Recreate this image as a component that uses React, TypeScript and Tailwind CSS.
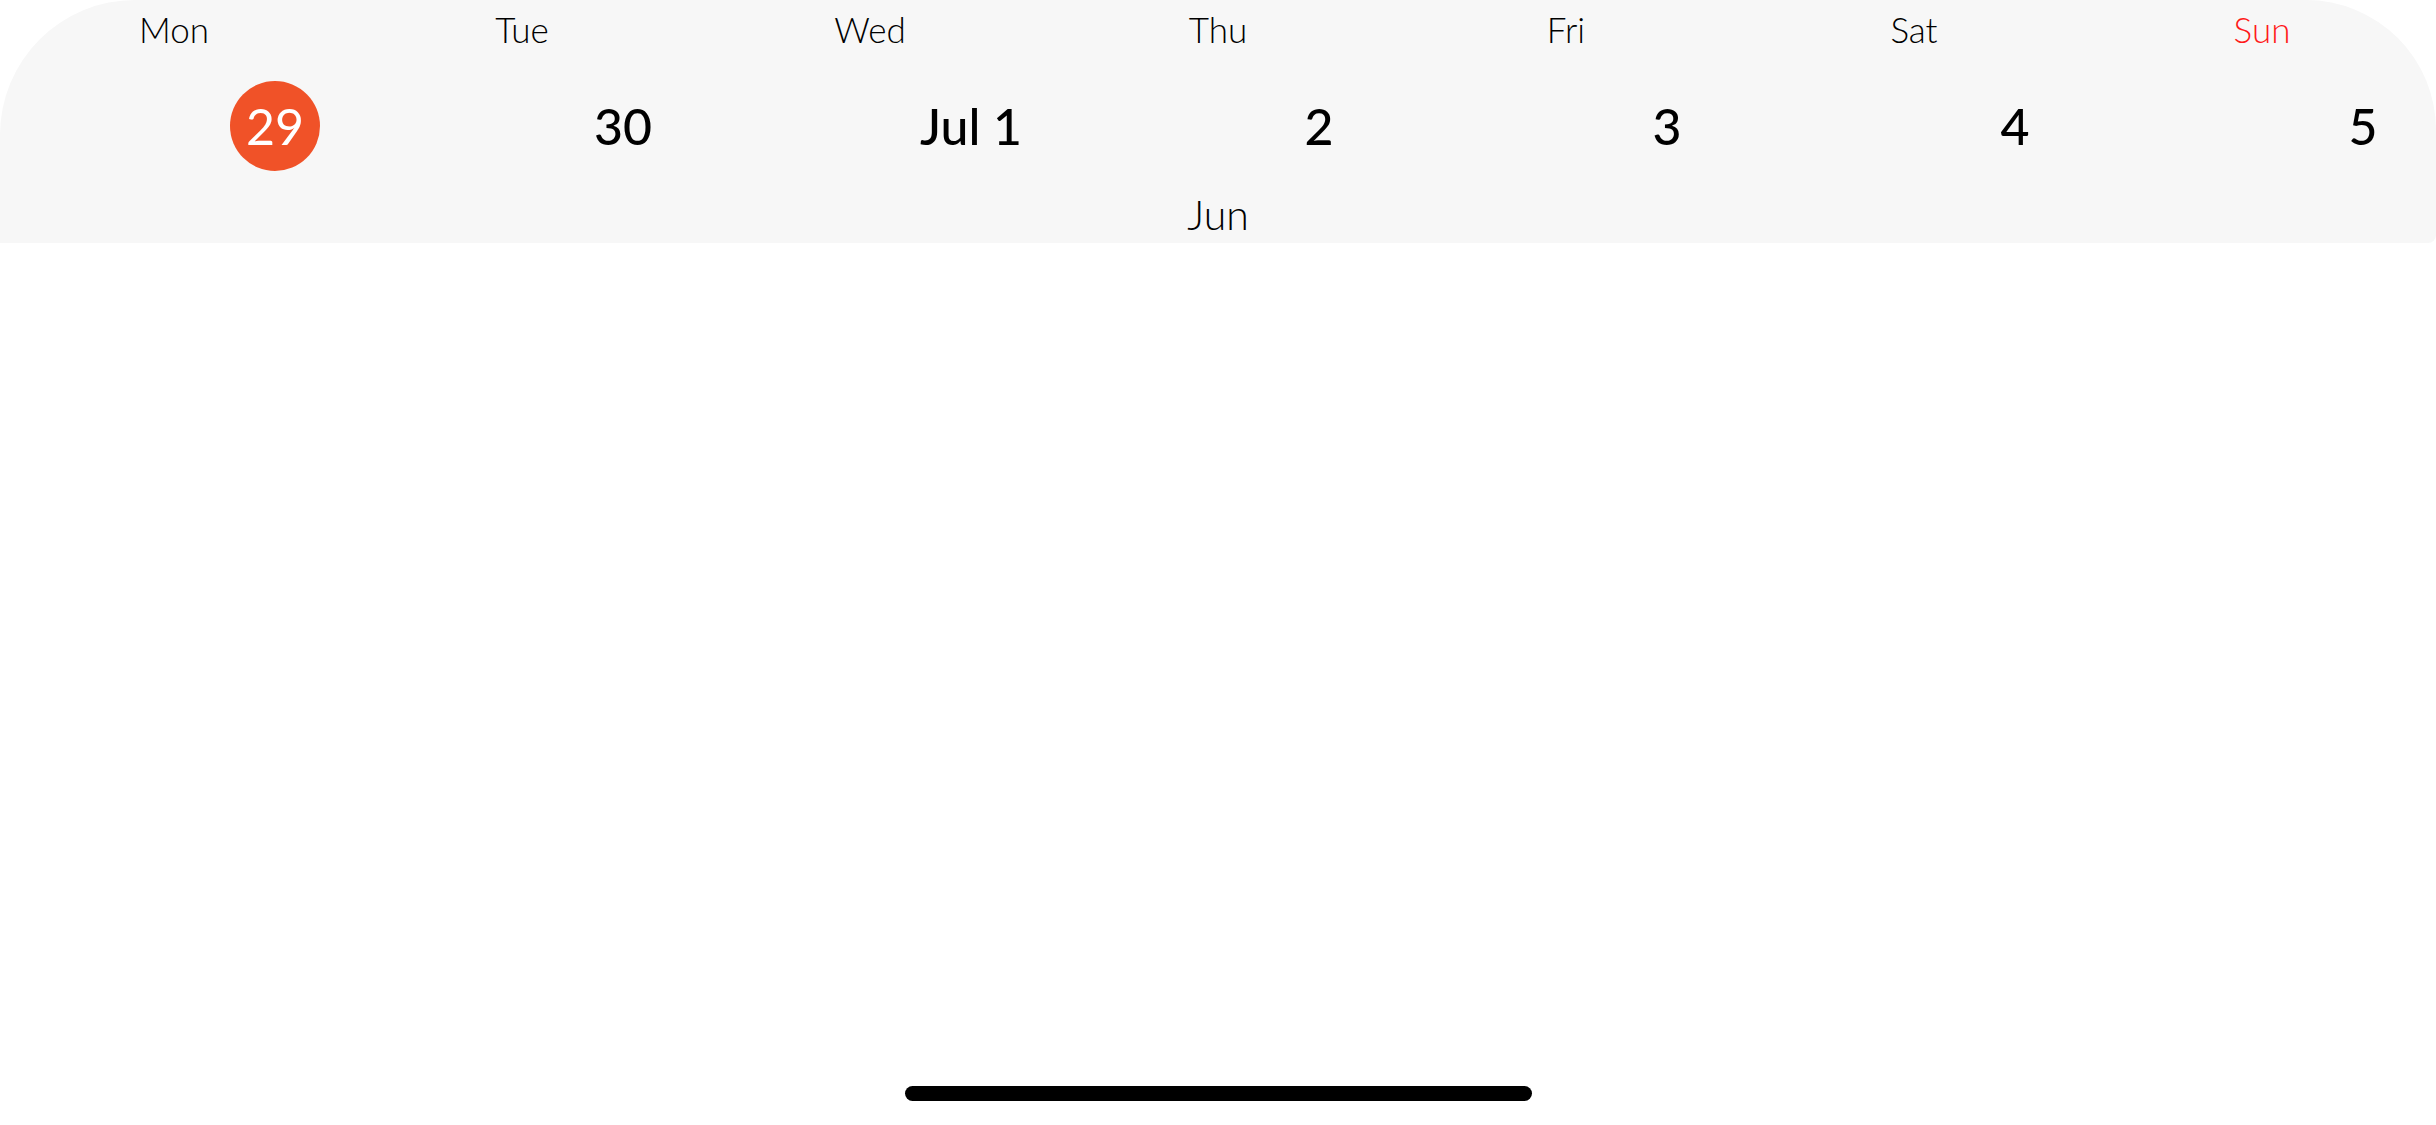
import React from "react";

const days = [
  { name: "Mon", date: "29", today: true },
  { name: "Tue", date: "30" },
  { name: "Wed", date: "Jul 1" },
  { name: "Thu", date: "2" },
  { name: "Fri", date: "3" },
  { name: "Sat", date: "4" },
  { name: "Sun", date: "5", sunday: true },
];

export default function App() {
  return (
    <div
      className="w-[2436px] h-[1125px] bg-white flex flex-col overflow-hidden"
      style={{ fontFamily: "Lato, 'Open Sans', sans-serif" }}
    >
      <div className="h-[243px] bg-[#f7f7f7] rounded-tl-[135px] rounded-tr-[130px] rounded-br-[8px] flex flex-col">
        <div className="grid grid-cols-7 pt-[8px]">
          {days.map((d) => (
            <div
              key={d.name}
              className={
                "text-center text-[35px] leading-[42px] font-light " +
                (d.sunday ? "text-[#ff1a1a]" : "text-black")
              }
            >
              {d.name}
            </div>
          ))}
        </div>
        <div className="grid grid-cols-7 mt-[31px] h-[90px]">
          {days.map((d) => (
            <div key={d.name} className="flex items-center justify-center pl-[202px]">
              {d.today ? (
                <div className="w-[90px] h-[90px] rounded-full bg-[#f05228] flex items-center justify-center text-white text-[50px] font-normal leading-none">
                  29
                </div>
              ) : (
                <div className="text-[50px] font-medium text-black leading-none whitespace-nowrap">
                  {d.date}
                </div>
              )}
            </div>
          ))}
        </div>
        <div className="mt-[20px] text-center text-[41px] leading-[48px] font-light text-black">
          Jun
        </div>
      </div>
      <div className="flex-1" />
      <div className="flex justify-center pb-[24px]">
        <div className="w-[627px] h-[15px] rounded-full bg-black" />
      </div>
    </div>
  );
}
